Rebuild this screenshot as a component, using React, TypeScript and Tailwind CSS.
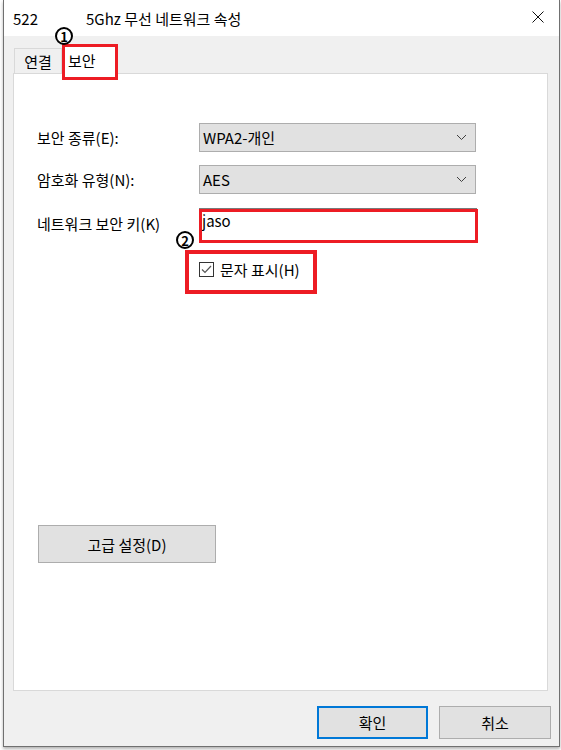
import React from 'react';

const font = { fontFamily: '"Noto Sans CJK KR", "Noto Sans", sans-serif' };

const Chevron: React.FC = () => (
  <svg width="11" height="7" viewBox="0 0 11 7" className="shrink-0">
    <path d="M1 1 L5.5 5.5 L10 1" fill="none" stroke="#404040" strokeWidth="1" />
  </svg>
);

const Select: React.FC<{ value: string }> = ({ value }) => (
  <div className="w-[277px] h-[29px] bg-[#e1e1e1] border border-[#adadad] flex items-center justify-between pl-[3px] pr-[8px]">
    <span className="text-[15px] leading-none text-black">{value}</span>
    <Chevron />
  </div>
);

const Row: React.FC<{ label: string; children: React.ReactNode }> = ({ label, children }) => (
  <div className="flex items-center">
    <div className="w-[162px] text-[15px] leading-none text-black">{label}</div>
    {children}
  </div>
);

// circled step number used as an annotation
const Badge: React.FC<{ n: string; className: string }> = ({ n, className }) => (
  <div
    className={`absolute w-[18px] h-[18px] rounded-full border-2 border-black bg-white flex items-center justify-center text-[13px] font-bold leading-none text-black z-20 ${className}`}
  >
    {n}
  </div>
);

const App: React.FC = () => {
  return (
    <div className="w-[561px] h-[750px] bg-white relative overflow-hidden" style={font}>
      <div className="ml-[3px] w-[557px] h-[747px] border-l border-r border-b border-[#707070] bg-[#f0f0f0] flex flex-col shadow-[0_2px_3px_rgba(0,0,0,0.3)]">
        {/* Title bar */}
        <div className="h-[36px] bg-white flex items-center shrink-0 relative">
          <span className="ml-[9px] text-[15px] leading-none text-black">522</span>
          <span className="ml-[48px] text-[15px] leading-none text-black">5Ghz 무선 네트워크 속성</span>
          <svg width="12" height="12" viewBox="0 0 12 12" className="absolute left-[528px] top-[11px]">
            <path d="M0.5 0.5 L11.5 11.5 M11.5 0.5 L0.5 11.5" stroke="#111" strokeWidth="1" />
          </svg>
        </div>

        {/* Tabs */}
        <div className="h-[37px] flex items-end pl-[10px] shrink-0 relative z-10">
          <div className="w-[48px] h-[25px] border border-b-0 border-[#d9d9d9] bg-[#f0f0f0] flex items-center justify-center text-[15px] leading-none text-black">
            연결
          </div>
          <div className="w-[56px] h-[29px] -mb-px border border-b-0 border-[#d9d9d9] bg-white flex items-center pl-[5px] text-[15px] leading-none text-black">
            보안
          </div>
        </div>

        {/* Panel */}
        <div className="mx-[9px] mr-[11px] h-[618px] bg-white border border-[#d9d9d9] flex flex-col pl-[23px] pt-[49px] shrink-0">
          <div className="flex flex-col gap-[13px]">
            <Row label="보안 종류(E):">
              <Select value="WPA2-개인" />
            </Row>
            <Row label="암호화 유형(N):">
              <Select value="AES" />
            </Row>
          </div>
          <div className="mt-[14px]">
            <Row label="네트워크 보안 키(K)">
              <div className="w-[278px] h-[30px] bg-white border-t border-[#7a7a7a] pl-[3px] pt-[4px] text-[15px] leading-none text-black">
                jaso
              </div>
            </Row>
          </div>
          <div className="mt-[24px] ml-[162px] flex items-center gap-[6px]">
            <div className="w-[15px] h-[15px] border border-[#333] bg-white flex items-center justify-center">
              <svg width="11" height="9" viewBox="0 0 11 9">
                <path d="M1 4.5 L4 7.5 L10 1" fill="none" stroke="#555" strokeWidth="1.2" />
              </svg>
            </div>
            <span className="text-[15px] leading-none text-black">문자 표시(H)</span>
          </div>

          <button className="mt-[248px] ml-px w-[178px] h-[38px] bg-[#e1e1e1] border border-[#adadad] text-[15px] leading-none text-black">
            고급 설정(D)
          </button>
        </div>

        {/* Footer */}
        <div className="flex-1 flex justify-end items-start pt-[15px] pr-[8px] gap-[11px]">
          <button className="w-[111px] h-[33px] bg-[#e1e1e1] border-2 border-[#0078d7] text-[15px] leading-none text-black">
            확인
          </button>
          <button className="w-[112px] h-[33px] bg-[#e1e1e1] border border-[#adadad] text-[15px] leading-none text-black">
            취소
          </button>
        </div>
      </div>

      {/* Annotations */}
      <div className="absolute left-[62px] top-[44px] w-[56px] h-[36px] border-[3px] border-[#ed1c24] z-20" />
      <Badge n="1" className="left-[55px] top-[27px]" />
      <div className="absolute left-[199px] top-[209px] w-[279px] h-[34px] border-[3px] border-[#ed1c24] z-20" />
      <Badge n="2" className="left-[176px] top-[231px]" />
      <div className="absolute left-[185px] top-[250px] w-[132px] h-[44px] border-[4px] border-[#ed1c24] z-20" />
    </div>
  );
};

export default App;
